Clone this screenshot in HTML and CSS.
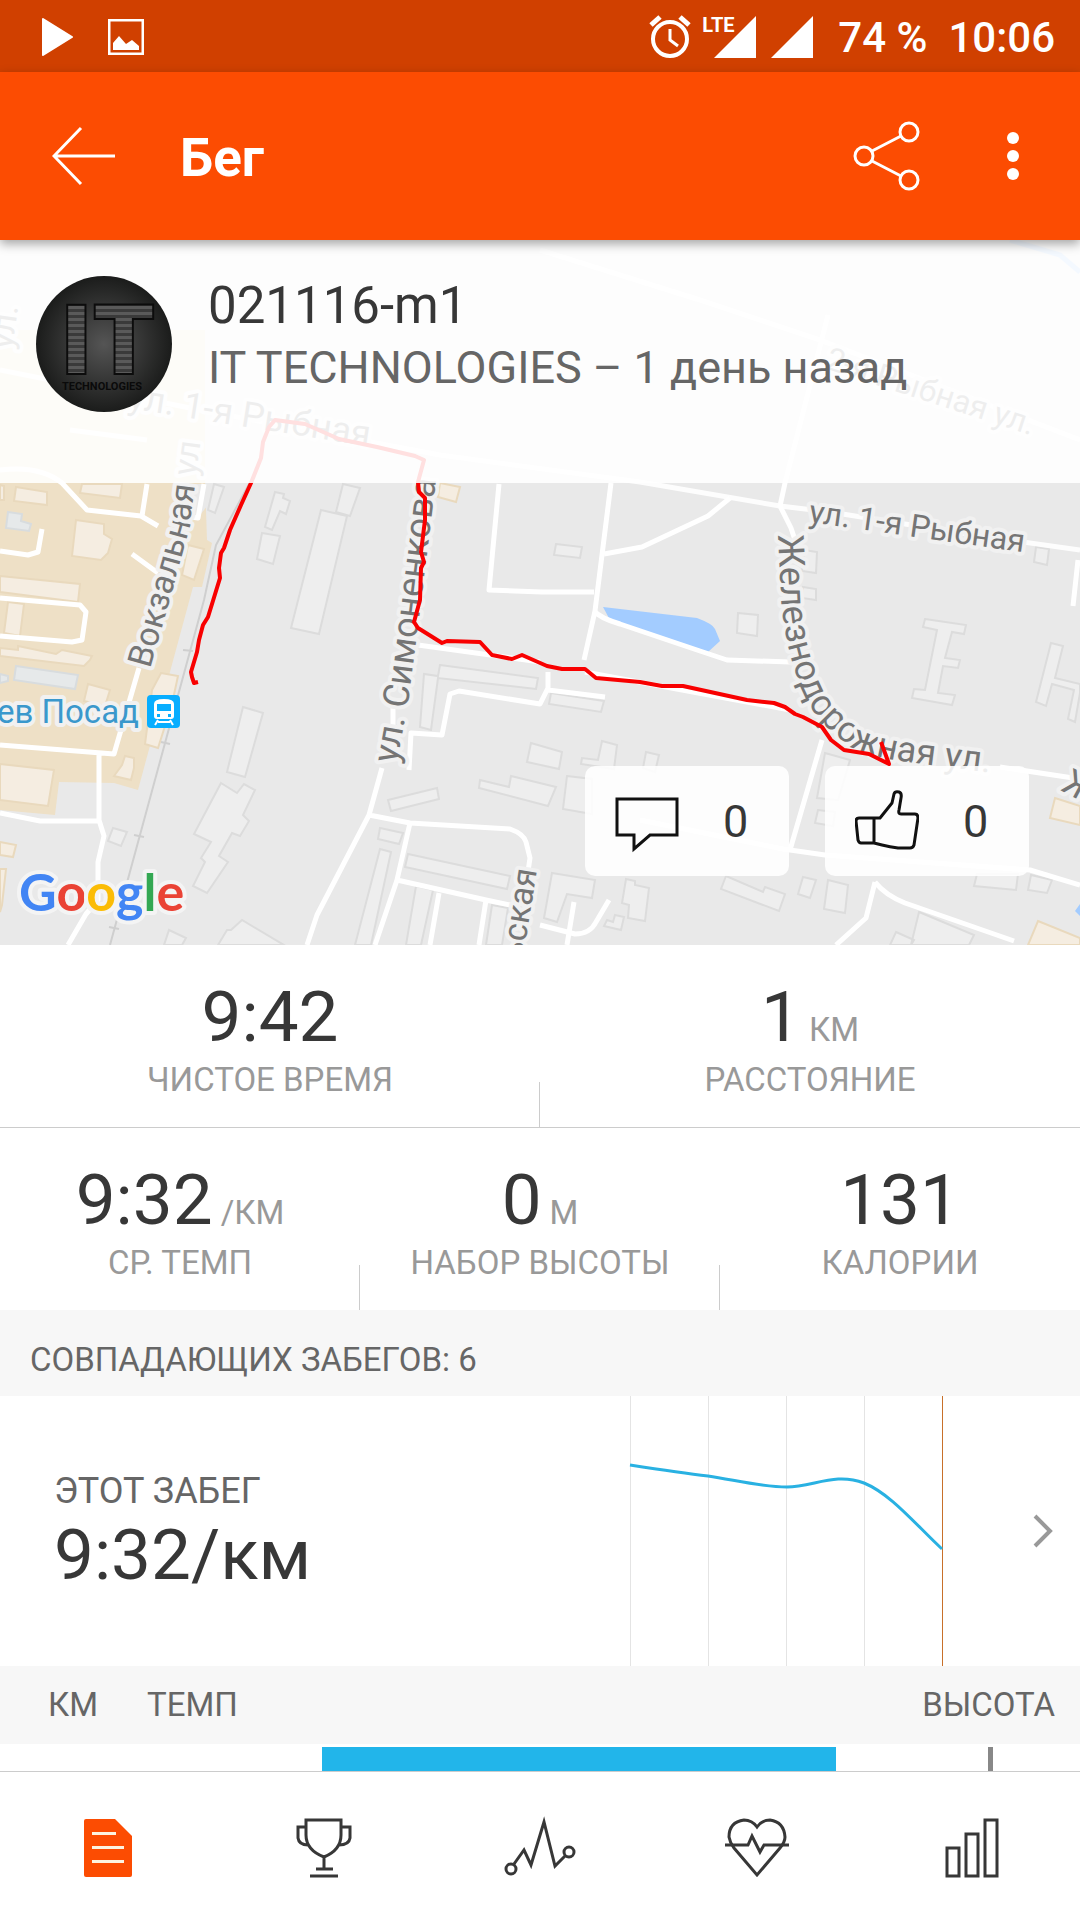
FILE: index.html
```html
<!DOCTYPE html>
<html lang="ru">
<head>
  <meta charset="UTF-8" />
  <meta name="viewport" content="width=device-width, initial-scale=1.0"/>
  <title>Бег</title>
  <link rel="stylesheet" href="styles.css">
</head>
<body>

<div class="status-bar">
  <div class="status-left">
    <svg width="32" height="40" viewBox="0 0 32 40"><path d="M2 2L31 20L2 38z" fill="#fff" stroke="#fff" stroke-width="2" stroke-linejoin="round"/></svg>
    <svg width="36" height="36" viewBox="0 0 36 36"><rect x="1" y="1" width="34" height="34" fill="none" stroke="#fff" stroke-width="3"/><path d="M5 31V24L11 17L18 25L24 21L31 27V31z" fill="#fff"/></svg>
  </div>
  <div class="status-right">
    <svg width="42" height="44" viewBox="0 0 42 44" fill="none" stroke="#fff" stroke-width="4"><circle cx="21" cy="24" r="17"/><path d="M21 14V25L29 31" stroke-width="3"/><path d="M2 10L11 2M40 10L31 2" stroke-width="5"/></svg>
    <span class="signal">
      <span class="lte">LTE</span>
      <svg width="42" height="42" viewBox="0 0 42 42"><path d="M42 0V42H0z" fill="#fff"/></svg>
    </span>
    <svg class="signal-2" width="42" height="42" viewBox="0 0 42 42"><path d="M42 0V42H0z" fill="#fff"/></svg>
    <span class="battery">74 %</span>
    <span>10:06</span>
  </div>
</div>

<header class="toolbar">
  <button class="icon-btn" aria-label="Назад">
    <svg width="64" height="60" viewBox="0 0 64 60" fill="none" stroke="#fff" stroke-width="3"><path d="M29 2L2 30L29 58M2 30H63"/></svg>
  </button>
  <h1>Бег</h1>
  <button class="icon-btn" aria-label="Поделиться">
    <svg width="68" height="72" viewBox="0 0 68 72" fill="none" stroke="#fff" stroke-width="3"><circle cx="11" cy="36" r="9"/><circle cx="56" cy="12" r="9"/><circle cx="56" cy="60" r="9"/><path d="M19 31L48 16M19 41L48 56"/></svg>
  </button>
  <button class="icon-btn menu-btn" aria-label="Меню">
    <svg width="14" height="52" viewBox="0 0 14 52" fill="#fff"><circle cx="7" cy="8" r="6"/><circle cx="7" cy="26" r="6"/><circle cx="7" cy="44" r="6"/></svg>
  </button>
</header>

<section class="map">
  <svg class="map-canvas" viewBox="0 240 1080 705" preserveAspectRatio="xMidYMid slice">
    <rect x="0" y="240" width="1080" height="705" fill="#e9e9e9"/>

    <!-- station district -->
    <path d="M0 330L205 330L205 480L207 540L212 543L202 587H193L138 790L114 783L59 782L55 815L0 810z" fill="#eee0c6"/>
    <path d="M176 484H208V505L196 520L185 505z" fill="#e9e9e9"/>

    <!-- buildings -->
    <g fill="#f5ede1" stroke="#e9d9bd" stroke-width="2">
      <path d="M16 487L47 492V505L14 501zM0 485L4 486V500H0zM82 484H122L120 498L80 493z"/>
      <path d="M76 520L104 524V534L112 539L108 553L101 560L72 556z"/>
      <path d="M0 576L80 584L78 602L0 592z"/>
      <path d="M8 602L24 604L20 636L4 633z"/>
      <path d="M0 648L18 650V646L56 654L62 650L92 656L90 660L84 666L0 656z"/>
      <path d="M88 684L110 690L105 706L84 701z"/>
      <path d="M161 673L178 676L172 704L158 748L145 744L152 690z"/>
      <path d="M122 765L125 756L134 758V768L131 780L114 776z"/>
      <path d="M0 764L54 770L48 806L0 800zM0 842L16 845L13 857L0 855zM0 869H6L2 905L0 912z"/>
      <path d="M188 545L204 549L194 580L182 575z"/>
      <path d="M440 483L460 487L456 502L438 497zM1055 798L1080 806V825L1050 818zM1038 921L1080 938V945H1028z"/>
    </g>
    <g fill="#e6e9ea" stroke="#d8dcde" stroke-width="2">
      <path d="M8 512L22 514L21 521L31 524L29 531L6 528z"/>
      <path d="M16 666L78 675L75 689L14 680zM0 674L8 676V681L0 683z"/>
    </g>
    <g fill="#eeeeee" stroke="#dcdcdc" stroke-width="2">
      <path d="M214 484L224 487L215 513L208 510zM275 492L284 494L283 498L290 501L286 514L280 511L272 530L265 527zM262 533L280 536L273 564L257 559z"/>
      <path d="M343 484L360 488L350 516L336 512zM321 510L347 516L319 634L291 628z"/>
      <path d="M243 707L263 713L245 777L227 772z"/>
      <path d="M221 783L237 793L244 784L255 790L243 815L249 821L240 836L232 833L219 856L228 862L207 893L193 886L205 862L201 858L211 842L194 834z"/>
      <path d="M113 828L127 832L121 846L108 841z"/>
      <path d="M169 930L186 938L182 945H164zM218 945L227 930H231L242 920L284 945z"/>
      <path d="M440 665L538 678L536 689L438 678L431 730L420 727L424 674L438 676z"/>
      <path d="M388 800L437 788L439 799L391 811zM380 828L403 833L399 844L378 839z"/>
      <path d="M380 849L391 852L371 945H355zM408 854L510 876L507 889L405 867zM416 886L433 890L421 945H406zM492 905L508 908L502 945H486z"/>
      <path d="M531 743L562 752L559 769L527 762zM480 780L509 787L511 776L556 787L548 806L479 788z"/>
      <path d="M551 693L604 701L601 712L549 704zM602 741L617 745L614 769L581 764L582 758L598 760zM646 752L659 755L655 772L643 768z"/>
      <path d="M567 776L592 779V814L563 809zM738 613L758 615L757 636L737 633z"/>
      <path d="M552 873L595 880L592 898L567 894L557 922L544 918z"/>
      <path d="M626 879L635 881V885L649 888L645 921L628 918L629 905L622 903z"/>
      <path d="M615 915L624 917L621 930L604 926L607 920L613 922z"/>
      <path d="M726 876L763 892L765 887L785 894L779 911L721 889zM803 877L816 880L810 898L798 894zM828 880L848 885L845 913L824 909z"/>
      <path d="M919 912L974 935L969 945H911zM977 874H1018L1016 890L974 886zM1031 875L1052 880L1047 893L1028 890zM896 932L914 940L911 945H890z"/>
      <path d="M825 753L850 760L838 800L817 798zM818 810L835 812L833 826L815 823z"/>
      <path d="M925 619L966 625L964 634L952 632L945 658L960 660L958 668L943 666L938 693L955 695L952 705L912 698L914 689L925 690L937 630L923 627z"/>
      <path d="M1051 643L1063 646L1055 678L1080 684V693L1075 722L1068 719L1074 690L1052 684L1046 706L1036 702z"/>
      <path d="M804 550L817 552L816 573L802 571zM803 587L816 589V600L802 598zM556 544L582 547L580 558L554 555zM1036 547L1049 549L1047 565L1034 562z"/>
    </g>

    <!-- water -->
    <path d="M603 607L697 618Q713 624 715 629L720 641L708 652L610 620z" fill="#a3ccff"/>
    <path d="M1080 904V916L1075 911z" fill="#a3ccff"/>
    <path d="M1010 240L1060 255L1080 272" fill="none" stroke="#a3ccff" stroke-width="5"/>

    <!-- railway -->
    <g fill="none" stroke="#cfcfcf" stroke-width="2">
      <path d="M249 484L216 545L204 600L110 945"/>
      <path d="M183 650L193 651M161 742L170 744M134 835L144 837M109 927L119 929"/>
    </g>

    <!-- roads -->
    <g fill="none" stroke="#fff" stroke-width="5" stroke-linejoin="round">
      <path d="M0 470Q40 465 62 483L87 510L141 516L158 526"/>
      <path d="M147 484L142 516M42 529L38 552L28 555L0 551M132 554L158 573"/>
      <path d="M0 598L80 605L86 612L82 640L72 642L0 636"/>
      <path d="M139 668L114 754L0 745M99 754V820L104 836L98 862V900L86 914L68 945M0 813L40 821H98"/>
      <path d="M204 484L198 518L185 516"/>
      <path d="M70 430L147 440M0 370L200 410L440 455L640 482L780 506L830 512L980 536L1080 550" opacity=".9"/>
      <path d="M499 484L489 590L542 592H594M611 483L595 611L584 660"/>
      <path d="M730 498L708 516L642 547L604 554"/>
      <path d="M828 315L785 483L780 506L791 528L795 540"/>
      <path d="M594 611Q600 618 620 624L700 651L727 660L790 662M540 662L418 645M585 672L790 710"/>
      <path d="M393 760L393 706M382 768L369 815L317 915L307 945M369 815L410 823L510 829Q524 834 526 842L530 858L526 885"/>
      <path d="M410 823L397 880L375 945M397 880L486 900L515 906M439 893L430 945M486 900L479 945"/>
      <path d="M409 770L411 733L442 735L450 694L459 691L540 704L548 688V672M548 690L605 697M540 925L575 934Q590 934 596 922L609 900M574 902L567 945"/>
      <path d="M822 740L790 850L825 855L1030 870L1080 885M788 850L640 820"/>
      <path d="M875 882L866 918L836 945M875 882Q885 895 905 903L1014 941M1000 767L1080 779M1078 560L1073 606"/>
      <path d="M540 250L700 300L820 340L1080 440"/>
    </g>

    <!-- street names -->
    <defs>
      <path id="p-vokzal" d="M150 669L172 592L189 530L201 440"/>
      <path id="p-simon" d="M397 764L409 696L420 610L430 530L441 440"/>
      <path id="p-zhel" d="M778 535L781 597Q784 640 797 677Q812 725 858 750Q880 759 915 763L1030 778"/>
    </defs>
    <g class="street">
      <text><textPath href="#p-vokzal">Вокзальная ул.</textPath></text>
      <text class="street-lg"><textPath href="#p-simon">ул. Симоненкова</textPath></text>
      <text class="street-lg"><textPath href="#p-zhel">Железнодорожная ул.</textPath></text>
      <text class="street-sm" transform="translate(808 522) rotate(8)">ул. 1-я Рыбная</text>
      <text class="street-lg" transform="translate(127 408) rotate(9)">ул. 1-я Рыбная</text>
      <text class="street-sm" transform="translate(824 368) rotate(18)">2-я Рыбная ул.</text>
      <text transform="translate(12 350) rotate(-82)">ул.</text>
      <text class="street-lg" transform="translate(1060 790) rotate(28)">Ж</text>
      <text transform="translate(537 870) rotate(-81)" text-anchor="end">ьская</text>
      <text class="station" x="139" y="723" text-anchor="end">ев Посад</text>
    </g>
    <rect x="147" y="695" width="33" height="33" rx="4" fill="#08aeff"/>
    <path d="M154 716V704Q154 699 164 699Q174 699 174 704V716Q174 719 171 719H157Q154 719 154 716z" fill="#fff"/>
    <path d="M157 704H171V711H157zM157 714H160V717H157zM168 714H171V717H168z" fill="#08aeff"/>
    <path d="M158 720L155 725M170 720L173 725M158 722H170" stroke="#fff" stroke-width="2"/>

    <!-- route -->
    <path d="M198 682L194 683L192 677L191 672L197 652L199 640L203 625L208 617L220 578L219 568L221 553L224 548L230 530L241 505L251 483L261 458L263 442L269 427L275 420L305 424L339 439L377 447L415 456L424 460L418 482L419 492L425 498L425 520L421 552L424 562L421 568L420 600L414 622L418 628L442 643L447 641L480 642L492 655L512 659L522 655L547 666L562 669H585L596 678L640 682L662 686H683L747 700L774 703L785 707L795 714L803 717L822 727L831 740L844 750L869 754L889 764L881 742" fill="none" stroke="#f80000" stroke-width="4" stroke-linejoin="round"/>

    <text class="google" x="19" y="911"><tspan fill="#4285f4">G</tspan><tspan fill="#ea4335">o</tspan><tspan fill="#fbbc05">o</tspan><tspan fill="#4285f4">g</tspan><tspan fill="#34a853">l</tspan><tspan fill="#ea4335">e</tspan></text>
  </svg>

  <div class="activity">
    <svg class="avatar" width="136" height="136" viewBox="0 0 136 136">
      <defs>
        <radialGradient id="ball"><stop offset="0" stop-color="#555"/><stop offset="1" stop-color="#1b1c1b"/></radialGradient>
        <pattern id="stripes" width="8" height="6" patternUnits="userSpaceOnUse"><rect width="8" height="6" fill="#3a3a3a"/><rect width="8" height="3" fill="#5a5a5a"/></pattern>
      </defs>
      <circle cx="68" cy="68" r="68" fill="url(#ball)"/>
      <g class="avatar-big">
        <text x="26" y="97">I</text>
        <text x="58" y="97">T</text>
      </g>
      <text class="avatar-small" x="66" y="114" text-anchor="middle">TECHNOLOGIES</text>
    </svg>
    <div>
      <h2>021116-m1</h2>
      <p>IT TECHNOLOGIES – 1 день назад</p>
    </div>
  </div>

  <div class="social">
    <button class="pill">
      <svg width="64" height="64" viewBox="0 0 64 64" fill="none" stroke="#111" stroke-width="3"><path d="M2 10H62V46H35L19 60V46H2z"/></svg>
      <span>0</span>
    </button>
    <button class="pill">
      <svg width="64" height="64" viewBox="0 0 64 64" fill="none" stroke="#111" stroke-width="3" stroke-linejoin="round"><path d="M19 29H25L37 14L39 5Q40 2 44 3Q47 4 46 9L44 21Q43 25 46 25H60Q63 25 63 29L59 56Q58 59 55 59H43Q35 58 27 56L19 54M19 29V54H6Q4 54 3 51L1 32Q1 29 4 29H19"/></svg>
      <span>0</span>
    </button>
  </div>
</section>

<div class="stats">
  <div class="stat"><div class="value">9:42</div><div class="label">ЧИСТОЕ ВРЕМЯ</div></div>
  <div class="stat"><div class="value">1<small>КМ</small></div><div class="label">РАССТОЯНИЕ</div></div>
</div>
<div class="stats">
  <div class="stat"><div class="value">9:32<small>/КМ</small></div><div class="label">СР. ТЕМП</div></div>
  <div class="stat"><div class="value">0<small>М</small></div><div class="label">НАБОР ВЫСОТЫ</div></div>
  <div class="stat"><div class="value">131</div><div class="label">КАЛОРИИ</div></div>
</div>

<h3 class="section-title">СОВПАДАЮЩИХ ЗАБЕГОВ: 6</h3>
<a class="matched" href="#runs">
  <div class="matched-text">
    <div class="matched-label">ЭТОТ ЗАБЕГ</div>
    <div class="value">9:32/км</div>
  </div>
  <svg width="316" height="270" viewBox="0 0 316 270">
    <path d="M1 0h1v270h-1zM79 0h1v270h-1zM157 0h1v270h-1zM235 0h1v270h-1z" fill="#e4e4e4"/>
    <path d="M313 0h1v270h-1z" fill="#c8702a"/>
    <path d="M1 69C27 73 53 77 79 80C106 84 132 91 158 91C184 91 206 76 235 87C262 98 287 129 313 153" fill="none" stroke="#29b1e2" stroke-width="3"/>
  </svg>
  <svg width="20" height="34" viewBox="0 0 20 34" fill="none" stroke="#999" stroke-width="4"><path d="M2 2L17 17L2 32"/></svg>
</a>

<table class="splits">
  <thead>
    <tr><th class="col-km">КМ</th><th>ТЕМП</th><th class="col-elev">ВЫСОТА</th></tr>
  </thead>
  <tbody>
    <tr><td></td><td class="pace"><div class="pace-bar"></div></td><td><div class="elev-mark"></div></td></tr>
  </tbody>
</table>

<nav class="tabs">
  <a href="#overview" aria-label="Обзор"><svg viewBox="0 0 72 72"><path d="M14 8H43L60 25V64Q60 66 58 66H14Q12 66 12 64V10Q12 8 14 8z" fill="#fc4c02"/><path d="M20 21h24v3h-24zM20 35h32v3h-32zM20 49h32v3h-32z" fill="#fdf3e0"/></svg></a>
  <a href="#awards" aria-label="Награды"><svg viewBox="0 0 72 72"><path d="M18 9H53V24Q53 39 36 46Q18 39 18 24zM18 16H10V27Q11 34 20 34M53 16H62V27Q61 34 51 34M36 46V58M28 58H45M22 65H50"/></svg></a>
  <a href="#analysis" aria-label="Анализ"><svg viewBox="0 0 72 72"><circle cx="7" cy="58" r="5"/><circle cx="65" cy="41" r="5"/><path d="M10 53L20 39L27 54L40 11L51 55L61 45"/></svg></a>
  <a href="#heart" aria-label="Пульс"><svg viewBox="0 0 72 72"><path d="M37 16Q32 9 24 9Q9 11 9 26Q10 32 14 37L37 64L60 37Q65 31 65 26Q64 11 50 9Q42 9 37 16z"/><path d="M5 34H28L32 25L40 41L44 34H69"/></svg></a>
  <a href="#zones" aria-label="Зоны"><svg viewBox="0 0 72 72"><path d="M11 37H23V65H11zM30 23H42V65H30zM49 9H61V65H49z"/></svg></a>
</nav>

</body>
</html>
```

FILE: styles.css
```css
* {
  box-sizing: border-box;
}

body {
  margin: 0;
  font-family: Roboto, 'Noto Sans', sans-serif;
  background: #fff;
  color: #373737;
}

h1, h2, h3, p {
  margin: 0;
  font-weight: 400;
}

a {
  color: inherit;
  text-decoration: none;
}

button {
  border: none;
  padding: 0;
  font: inherit;
  color: inherit;
  cursor: pointer;
}

svg {
  display: block;
  flex-shrink: 0;
}

/* top bars */
.status-bar {
  display: flex;
  justify-content: space-between;
  align-items: center;
  height: 72px;
  padding: 2px 25px 0 41px;
  background: #d04000;
  color: #fff;
  font-size: 42px;
  font-weight: 500;
}

.status-left,
.status-right {
  display: flex;
  align-items: center;
}

.status-left {
  gap: 35px;
}

.status-right {
  gap: 25px;
}

.battery {
  margin-right: -4px;
}

.signal {
  position: relative;
  margin-left: -2px;
}

.lte {
  position: absolute;
  left: -12px;
  top: -2px;
  font-size: 20px;
  line-height: 22px;
  font-weight: 700;
}

.signal-2 {
  margin-left: -10px;
}

.toolbar {
  position: relative;
  z-index: 2;
  display: flex;
  align-items: center;
  height: 168px;
  padding: 0 60px 0 52px;
  background: #fc4c02;
  color: #fff;
  box-shadow: 0 4px 10px rgba(0, 0, 0, 0.35);
}

.toolbar h1 {
  flex: 1;
  padding: 4px 0 0 64px;
  font-size: 53px;
  font-weight: 700;
}

.icon-btn {
  background: none;
}

.menu-btn {
  margin-left: 85px;
}

/* map */
.map {
  position: relative;
  height: 705px;
  overflow: hidden;
}

.map-canvas {
  width: 100%;
  height: 100%;
}

.street {
  font-size: 34px;
  fill: #757575;
  stroke: #f1f1f1;
  stroke-width: 8px;
  stroke-linejoin: round;
  paint-order: stroke;
}

.street-lg {
  font-size: 36px;
}

.street-sm {
  font-size: 32px;
}

.station {
  font-size: 33px;
  fill: #3a98cc;
}

.google {
  font-family: Lato, sans-serif;
  font-size: 52px;
  font-weight: 700;
  stroke: #f4f4f4;
  stroke-width: 8px;
  stroke-linejoin: round;
  paint-order: stroke;
}

.activity {
  position: absolute;
  top: 0;
  left: 0;
  right: 0;
  display: flex;
  gap: 36px;
  height: 243px;
  padding: 36px;
  background: rgba(255, 255, 255, 0.88);
}

.activity h2 {
  font-size: 51px;
  line-height: 60px;
}

.activity p {
  font-size: 45px;
  line-height: 64px;
  color: #666;
}

.avatar-big {
  font-size: 95px;
  font-weight: 900;
  fill: url(#stripes);
  stroke: #0c0c0c;
  stroke-width: 4px;
  paint-order: stroke;
}

.avatar-small {
  font-size: 11px;
  font-weight: 700;
  fill: #0a0a0a;
}

.social {
  position: absolute;
  right: 51px;
  bottom: 69px;
  display: flex;
  gap: 36px;
}

.pill {
  display: flex;
  align-items: center;
  gap: 44px;
  width: 204px;
  height: 110px;
  padding-left: 30px;
  border-radius: 10px;
  background: rgba(255, 255, 255, 0.88);
  font-size: 45px;
}

/* stats */
.stats {
  display: flex;
}

.stats + .stats {
  border-top: 1px solid #ccc;
}

.stat {
  flex: 1;
  padding: 36px 0 27px;
  text-align: center;
}

.stat:not(:last-child) {
  background: linear-gradient(#ccc, #ccc) right bottom / 1px 45px no-repeat;
}

.value {
  font-size: 71px;
  line-height: 72px;
}

.value small {
  margin-left: 8px;
  font-size: 33px;
  line-height: 33px;
  color: #999;
}

.label {
  margin-top: 7px;
  font-size: 33px;
  line-height: 40px;
  color: #999;
}

.section-title {
  padding: 30px 30px 16px;
  background: #f7f7f7;
  color: #666;
  font-size: 33px;
  line-height: 40px;
}

/* matched runs */
.matched {
  display: flex;
  align-items: center;
  padding: 0 27px 0 54px;
}

.matched-text {
  flex: 1;
}

.matched-label {
  margin-bottom: 8px;
  font-size: 36px;
  line-height: 40px;
  color: #666;
}

.matched svg:last-child {
  margin-left: 88px;
}

/* splits */
.splits {
  width: 100%;
  border-collapse: collapse;
  table-layout: fixed;
}

.splits th {
  padding: 19px 0;
  background: #f7f7f7;
  color: #666;
  font-size: 33px;
  line-height: 40px;
  font-weight: 400;
  text-align: left;
}

.splits .col-km {
  width: 147px;
  padding-left: 48px;
}

.splits .col-elev {
  width: 244px;
  padding-right: 25px;
  text-align: right;
}

.splits td {
  padding: 3px 0 0;
}

.splits .pace {
  padding-left: 175px;
}

.pace-bar {
  height: 24px;
  background: #22b5ea;
}

.elev-mark {
  width: 5px;
  height: 24px;
  margin-left: 152px;
  background: #888;
}

/* bottom tabs */
.tabs {
  display: flex;
  border-top: 1px solid #ccc;
}

.tabs a {
  flex: 1;
  padding: 39px 0 36px;
}

.tabs svg {
  width: 72px;
  height: 72px;
  margin: 0 auto;
  fill: none;
  stroke: #373737;
  stroke-width: 3px;
}

.tabs a:first-child svg {
  stroke: none;
}
```
